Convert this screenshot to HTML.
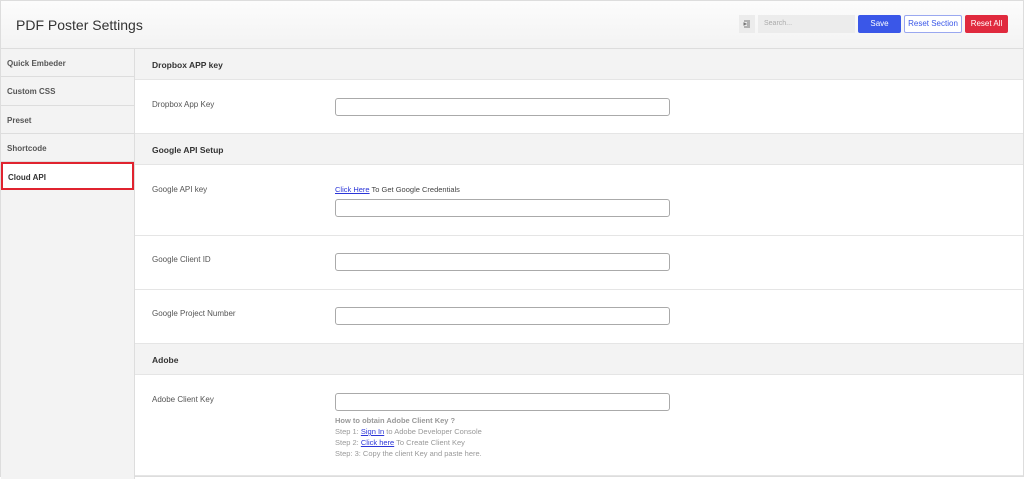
<!DOCTYPE html>
<html><head><meta charset="utf-8"><style>
*{box-sizing:border-box;margin:0;padding:0}
body{width:1024px;height:477px;background:#fff;font-family:"Liberation Sans",sans-serif;overflow:hidden;position:relative;color:#333}
.wrap{position:absolute;left:0;top:0;width:1024px;height:477px;border:1px solid #ddd}
.hdr{position:absolute;z-index:2;left:-1px;top:-1px;width:1024px;height:49px;background:linear-gradient(#fcfcfc,#f3f3f3);border:1px solid #ddd}
.hdr h1{position:absolute;left:15px;top:16px;font-size:14px;font-weight:normal;color:#333}
.abs{position:absolute}
.btn{position:absolute;top:15px;height:18px;font-size:8px;line-height:16px;text-align:center;border-radius:2px}
.side{position:absolute;left:0;top:48px;width:134px;height:430px;background:#f3f3f3;border-right:1px solid #ddd}
.side div{height:28.3px;border-bottom:1px solid #ddd;font-size:8px;font-weight:bold;color:#555;padding:10px 0 0 6px}
.side .act{background:#fff;border:2px solid #e0232f;color:#333;padding:9px 0 0 5px;height:28px}
.sec{position:absolute;left:134px;width:888px;background:#f3f3f3;border-bottom:1px solid #e5e5e5;font-size:8.5px;font-weight:bold;color:#333;padding-left:17px}
.row{position:absolute;left:134px;width:888px;border-bottom:1px solid #e5e5e5}
.lbl{position:absolute;left:151px;font-size:8px;color:#555}
.inp{position:absolute;left:334px;width:335px;height:18px;border:1px solid #aaa;border-radius:3px;background:#fff}
.t{position:absolute;left:334px;font-size:7.5px;color:#999}
a{color:#2b35d8;text-decoration:underline}
</style></head><body><div class="wrap">
<div class="hdr"><h1>PDF Poster Settings</h1>
<div class="abs" style="left:738px;top:14px;width:16px;height:18px;background:#ececec"><svg width="16" height="18"><path d="M5 6h6M8 8h3M8 10h3M5 12h6M5 8l2 1-2 1z" stroke="#777" stroke-width="1" fill="#777"/></svg></div>
<div class="abs" style="left:757px;top:14px;width:97px;height:18px;background:#ececec;font-size:7px;color:#aaa;padding:5px 0 0 6px">Search...</div>
<div class="btn" style="left:857px;top:14px;width:43px;background:#3a57e8;color:#fff;border:1px solid #3a57e8">Save</div>
<div class="btn" style="left:903px;top:14px;width:58px;background:#fff;color:#3a57e8;border:1px solid #9aa8f0">Reset Section</div>
<div class="btn" style="left:964px;top:14px;width:43px;background:#e02a3e;color:#fff;border:1px solid #e02a3e">Reset All</div>
</div>
<div class="side"><div>Quick Embeder</div><div>Custom CSS</div><div>Preset</div><div>Shortcode</div><div class="act">Cloud API</div></div>
<div class="sec" style="top:47px;height:32px;padding-top:12px">Dropbox APP key</div>
<div class="row" style="top:79px;height:54px"></div>
<div class="lbl" style="top:99px">Dropbox App Key</div><div class="inp" style="top:97px"></div>
<div class="sec" style="top:133px;height:31px;padding-top:11px">Google API Setup</div>
<div class="row" style="top:164px;height:71px"></div>
<div class="lbl" style="top:184px">Google API key</div>
<div class="t" style="top:184px;color:#444"><a>Click Here</a> To Get Google Credentials</div>
<div class="inp" style="top:198px"></div>
<div class="row" style="top:235px;height:54px"></div>
<div class="lbl" style="top:254px">Google Client ID</div><div class="inp" style="top:252px"></div>
<div class="row" style="top:289px;height:54px"></div>
<div class="lbl" style="top:308px">Google Project Number</div><div class="inp" style="top:306px"></div>
<div class="sec" style="top:343px;height:31px;padding-top:11px">Adobe</div>
<div class="row" style="top:374px;height:101px"></div>
<div class="lbl" style="top:394px">Adobe Client Key</div><div class="inp" style="top:392px"></div>
<div class="t" style="top:415px;font-weight:bold">How to obtain Adobe Client Key ?</div>
<div class="t" style="top:426px">Step 1: <a>Sign In</a> to Adobe Developer Console</div>
<div class="t" style="top:437px">Step 2: <a>Click here</a> To Create Client Key</div>
<div class="t" style="top:448px">Step: 3: Copy the client Key and paste here.</div>
</div></body></html>
